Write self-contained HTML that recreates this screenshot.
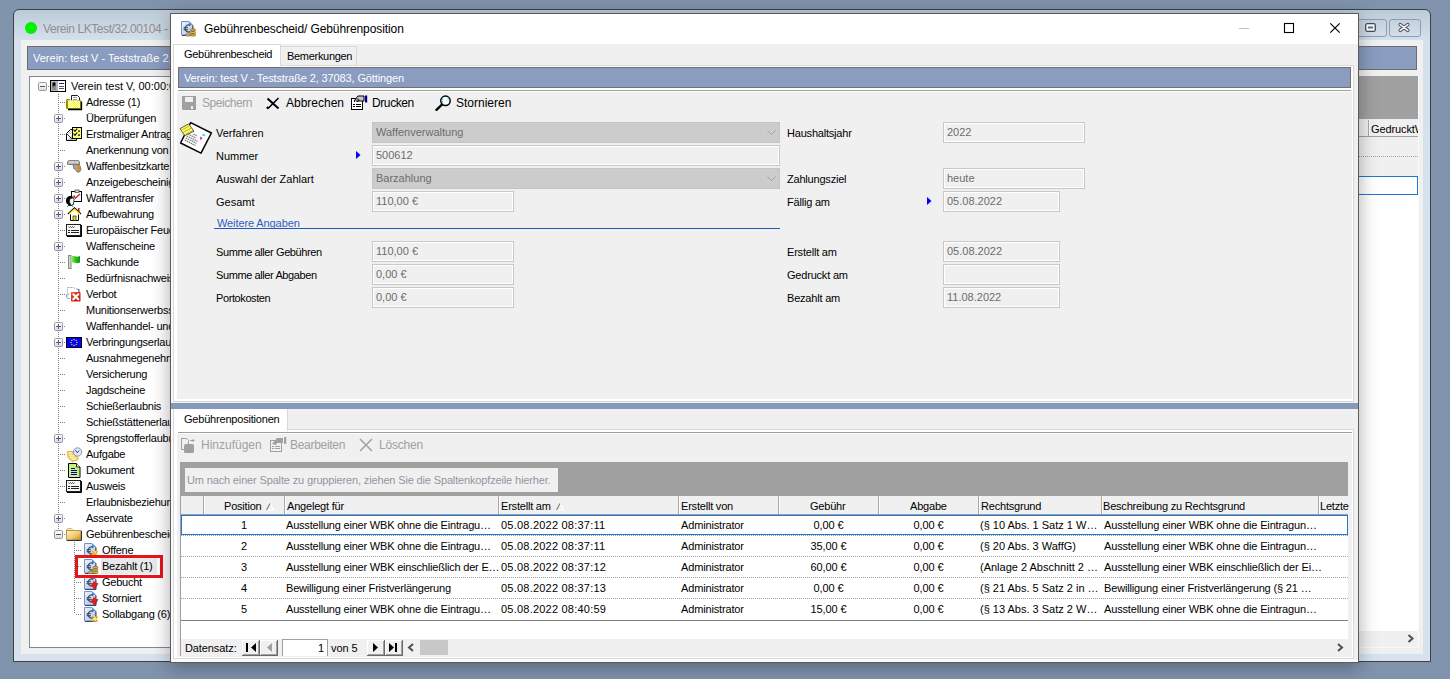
<!DOCTYPE html><html><head><meta charset="utf-8"><style>
html,body{margin:0;padding:0}
body{width:1450px;height:679px;overflow:hidden;position:relative;background:#7f93ad;font-family:"Liberation Sans",sans-serif}
.t{position:absolute;white-space:nowrap;font-family:"Liberation Sans",sans-serif}
.b{position:absolute;box-sizing:border-box}
svg{position:absolute;overflow:visible}
</style></head><body>
<div class="b" style="left:13px;top:9px;width:1418px;height:653px;border:1px solid #404040;border-radius:6px 6px 0 0;background:linear-gradient(#bccbd9 0px,#cfdce8 24px,#d5e2ee 31px,#d6e3ef 100%);"></div>
<div class="b" style="left:21px;top:40px;width:1402px;height:614px;background:#f0f0f0;"></div>
<div class="b" style="left:25px;top:22px;width:12px;height:12px;background:#00f000;border-radius:50%;"></div>
<div class="t" style="left:43px;top:22px;font-size:12px;line-height:14px;color:#948c8c;letter-spacing:-0.42px;">Verein LKTest/32.00104 - Teststraße 2, 37083, Göttingen</div>
<div class="b" style="left:1355px;top:19px;width:32px;height:18px;border:1px solid #8d9bb3;border-radius:3px;background:linear-gradient(#c4d1de,#d2deea);"></div>
<div class="b" style="left:1389px;top:19px;width:32px;height:18px;border:1px solid #8d9bb3;border-radius:3px;background:linear-gradient(#c4d1de,#d2deea);"></div>
<div class="b" style="left:27px;top:46px;width:1390px;height:24px;border:1px solid #6c6c6c;background:#8a9cc0;"></div>
<div class="t" style="left:33px;top:52px;font-size:11px;line-height:13px;color:#fff;">Verein: test V - Teststraße 2, 37083, Göttingen</div>
<div class="b" style="left:29px;top:76px;width:371px;height:572px;border:1px solid #828790;background:#fff;"></div>
<div class="b" style="left:58px;top:94px;width:1px;height:440px;background:repeating-linear-gradient(#808080 0 1px,transparent 1px 2px)"></div>
<div class="b" style="left:74px;top:542px;width:1px;height:72px;background:repeating-linear-gradient(#808080 0 1px,transparent 1px 2px)"></div>
<div class="t" style="left:71px;top:80px;font-size:11px;line-height:13px;color:#000;letter-spacing:0px;">Verein test V, 00:00:00</div>
<svg style="left:38px;top:82px" width="9" height="9" viewBox="0 0 9 9"><defs><linearGradient id="eg" x1="0" y1="0" x2="0" y2="1"><stop offset="0" stop-color="#ffffff"/><stop offset="1" stop-color="#dcdcdc"/></linearGradient></defs><rect x="0.5" y="0.5" width="8" height="8" rx="1.2" fill="url(#eg)" stroke="#989898"/><rect x="2" y="4" width="5" height="1" fill="#3d5a9c"/></svg>
<div class="b" style="left:48px;top:86px;width:2px;height:1px;background:repeating-linear-gradient(90deg,#808080 0 1px,transparent 1px 2px)"></div>
<svg style="left:50px;top:80px" width="16" height="12" viewBox="0 0 16 12"><rect x="0.5" y="0.5" width="15" height="11" fill="#fff" stroke="#000"/><rect x="1" y="1" width="6" height="10" fill="#b8b8b8"/><path d="M2.5 2.5 h3 v4 h-1 v-1 h-1 v2 h-1 z" fill="#000"/><rect x="2" y="7" width="4" height="3" fill="#8a8a8a"/><rect x="7" y="1" width="1" height="10" fill="#000" opacity="0.3"/><rect x="9" y="3" width="5" height="1" fill="#1a2ab0"/><rect x="9" y="6" width="5" height="1" fill="#555"/><rect x="9" y="8" width="5" height="1" fill="#555"/></svg>
<div class="t" style="left:86px;top:96px;font-size:11px;line-height:13px;color:#000;letter-spacing:-0.25px;">Adresse (1)</div>
<div class="b" style="left:60px;top:102px;width:6px;height:1px;background:repeating-linear-gradient(90deg,#808080 0 1px,transparent 1px 2px)"></div>
<svg style="left:66px;top:95px" width="17" height="16" viewBox="0 0 17 16"><defs><pattern id="dith" width="2" height="2" patternUnits="userSpaceOnUse"><rect width="2" height="2" fill="#ffff00"/><rect width="1" height="1" fill="#fff"/><rect x="1" y="1" width="1" height="1" fill="#fff"/></pattern></defs><path d="M0.5 4.5 h3 v9 h-3 z" fill="#e8e890" stroke="#909000"/><path d="M1.5 5.5 h13 v8 h-13 z" fill="url(#dith)" stroke="#909000"/><path d="M5.5 0.5 h6 l2 2 v3 h-8 z" fill="#fff" stroke="#202020"/><rect x="7" y="2" width="4" height="1" fill="#a0a0a0"/><rect x="7" y="4" width="4" height="1" fill="#a0a0a0"/><path d="M1.5 5.5 h12" stroke="#d8d8a0" stroke-width="1"/><path d="M2 14.5 h13.5 v-8" fill="none" stroke="#000" stroke-width="1.3"/></svg>
<div class="t" style="left:86px;top:112px;font-size:11px;line-height:13px;color:#000;letter-spacing:-0.25px;">Überprüfungen</div>
<svg style="left:54px;top:114px" width="9" height="9" viewBox="0 0 9 9"><defs><linearGradient id="eg" x1="0" y1="0" x2="0" y2="1"><stop offset="0" stop-color="#ffffff"/><stop offset="1" stop-color="#dcdcdc"/></linearGradient></defs><rect x="0.5" y="0.5" width="8" height="8" rx="1.2" fill="url(#eg)" stroke="#989898"/><rect x="2" y="4" width="5" height="1" fill="#3d5a9c"/><rect x="4" y="2" width="1" height="5" fill="#3d5a9c"/></svg>
<div class="b" style="left:64px;top:118px;width:2px;height:1px;background:repeating-linear-gradient(90deg,#808080 0 1px,transparent 1px 2px)"></div>
<div class="t" style="left:86px;top:128px;font-size:11px;line-height:13px;color:#000;letter-spacing:-0.25px;">Erstmaliger Antrag</div>
<div class="b" style="left:60px;top:134px;width:6px;height:1px;background:repeating-linear-gradient(90deg,#808080 0 1px,transparent 1px 2px)"></div>
<svg style="left:66px;top:127px" width="16" height="14" viewBox="0 0 16 14"><defs><pattern id="dith2" width="2" height="2" patternUnits="userSpaceOnUse"><rect width="2" height="2" fill="#ffff00"/><rect width="1" height="1" fill="#fff"/><rect x="1" y="1" width="1" height="1" fill="#fff"/></pattern><pattern id="dithg" width="2" height="2" patternUnits="userSpaceOnUse"><rect width="2" height="2" fill="#fff"/><rect width="1" height="1" fill="#c0c0c0"/><rect x="1" y="1" width="1" height="1" fill="#c0c0c0"/></pattern></defs><path d="M0.5 6.5 L4.5 2.5 h6 v11 h-10 z" fill="#fff" stroke="#000"/><path d="M1 7 L5 3 h3 v4 z" fill="url(#dithg)"/><path d="M1 13 L6 8 h4 v5 z" fill="#c8c8c8"/><path d="M1 7 L6 12" stroke="#000" stroke-width="0.8"/><rect x="6.5" y="0.5" width="9" height="11" fill="url(#dith2)" stroke="#000"/><path d="M7.5 2.5 l1.5 1.8 l2.2 -2.8 M7.5 6.5 l1.5 1.8 l2.2 -2.8" fill="none" stroke="#000" stroke-width="1.1"/><rect x="12" y="3.5" width="2" height="1.2" fill="#000"/><rect x="12" y="7.5" width="2" height="1.2" fill="#000"/></svg>
<div class="t" style="left:86px;top:144px;font-size:11px;line-height:13px;color:#000;letter-spacing:-0.25px;">Anerkennung von</div>
<div class="b" style="left:60px;top:150px;width:6px;height:1px;background:repeating-linear-gradient(90deg,#808080 0 1px,transparent 1px 2px)"></div>
<div class="t" style="left:86px;top:160px;font-size:11px;line-height:13px;color:#000;letter-spacing:-0.25px;">Waffenbesitzkarte</div>
<svg style="left:54px;top:162px" width="9" height="9" viewBox="0 0 9 9"><defs><linearGradient id="eg" x1="0" y1="0" x2="0" y2="1"><stop offset="0" stop-color="#ffffff"/><stop offset="1" stop-color="#dcdcdc"/></linearGradient></defs><rect x="0.5" y="0.5" width="8" height="8" rx="1.2" fill="url(#eg)" stroke="#989898"/><rect x="2" y="4" width="5" height="1" fill="#3d5a9c"/><rect x="4" y="2" width="1" height="5" fill="#3d5a9c"/></svg>
<div class="b" style="left:64px;top:166px;width:2px;height:1px;background:repeating-linear-gradient(90deg,#808080 0 1px,transparent 1px 2px)"></div>
<svg style="left:67px;top:160px" width="15" height="13" viewBox="0 0 15 13"><path d="M0.5 2 l1 -1.5 h10 l1 1 v3 h-12 z" fill="#b8b8b8" stroke="#787878" stroke-width="0.9"/><rect x="2" y="1.5" width="9" height="1" fill="#e8e8e8"/><rect x="7" y="1.5" width="1" height="1" fill="#d0a040"/><path d="M6 4.5 h6.5 l1.5 5 l-1.5 2.5 h-2.5 l-1.5 -3 h-1.5 z" fill="#a8a8a8" stroke="#707070" stroke-width="0.9"/><path d="M9.8 5 h2.5 l1.3 4.5 l-1.2 2 h-1.3 z" fill="#d09020"/></svg>
<div class="t" style="left:86px;top:176px;font-size:11px;line-height:13px;color:#000;letter-spacing:-0.25px;">Anzeigebescheinigung</div>
<svg style="left:54px;top:178px" width="9" height="9" viewBox="0 0 9 9"><defs><linearGradient id="eg" x1="0" y1="0" x2="0" y2="1"><stop offset="0" stop-color="#ffffff"/><stop offset="1" stop-color="#dcdcdc"/></linearGradient></defs><rect x="0.5" y="0.5" width="8" height="8" rx="1.2" fill="url(#eg)" stroke="#989898"/><rect x="2" y="4" width="5" height="1" fill="#3d5a9c"/><rect x="4" y="2" width="1" height="5" fill="#3d5a9c"/></svg>
<div class="b" style="left:64px;top:182px;width:2px;height:1px;background:repeating-linear-gradient(90deg,#808080 0 1px,transparent 1px 2px)"></div>
<div class="t" style="left:86px;top:192px;font-size:11px;line-height:13px;color:#000;letter-spacing:-0.25px;">Waffentransfer</div>
<svg style="left:54px;top:194px" width="9" height="9" viewBox="0 0 9 9"><defs><linearGradient id="eg" x1="0" y1="0" x2="0" y2="1"><stop offset="0" stop-color="#ffffff"/><stop offset="1" stop-color="#dcdcdc"/></linearGradient></defs><rect x="0.5" y="0.5" width="8" height="8" rx="1.2" fill="url(#eg)" stroke="#989898"/><rect x="2" y="4" width="5" height="1" fill="#3d5a9c"/><rect x="4" y="2" width="1" height="5" fill="#3d5a9c"/></svg>
<div class="b" style="left:64px;top:198px;width:2px;height:1px;background:repeating-linear-gradient(90deg,#808080 0 1px,transparent 1px 2px)"></div>
<svg style="left:65px;top:190px" width="18" height="17" viewBox="0 0 18 17"><rect x="6.5" y="1.5" width="10" height="10" fill="#fff" stroke="#000"/><rect x="10" y="0" width="4" height="2.5" fill="#d8d8d8" stroke="#404040" stroke-width="0.7"/><path d="M8.5 5.5 l2 2.5 l4.5 -4" fill="none" stroke="#d02020" stroke-width="1.3"/><path d="M1 11 C1 7.5 3 6 5.5 6 C7 6 8 6.6 8.5 7.5 L5.5 8.5 L4.5 10 L4.5 12.5 L5.5 14 L6 16 L3.5 16 L3 14.5 C1.8 14.2 1 12.8 1 11 Z" fill="#000"/><path d="M5.5 8.5 L8.5 7.8 L9.3 10 L8.6 10.8 L9.2 12 L8.4 12.6 L8.6 14.5 L7 15 L6.5 16 L5.5 14 L4.6 12.5 L4.6 10 Z" fill="#fff" stroke="#000" stroke-width="0.8"/><rect x="2" y="16" width="1.2" height="1" fill="#10b0b0"/><rect x="7" y="16" width="1.2" height="1" fill="#10b0b0"/></svg>
<div class="t" style="left:86px;top:208px;font-size:11px;line-height:13px;color:#000;letter-spacing:-0.25px;">Aufbewahrung</div>
<svg style="left:54px;top:210px" width="9" height="9" viewBox="0 0 9 9"><defs><linearGradient id="eg" x1="0" y1="0" x2="0" y2="1"><stop offset="0" stop-color="#ffffff"/><stop offset="1" stop-color="#dcdcdc"/></linearGradient></defs><rect x="0.5" y="0.5" width="8" height="8" rx="1.2" fill="url(#eg)" stroke="#989898"/><rect x="2" y="4" width="5" height="1" fill="#3d5a9c"/><rect x="4" y="2" width="1" height="5" fill="#3d5a9c"/></svg>
<div class="b" style="left:64px;top:214px;width:2px;height:1px;background:repeating-linear-gradient(90deg,#808080 0 1px,transparent 1px 2px)"></div>
<svg style="left:67px;top:207px" width="15" height="14" viewBox="0 0 15 14"><path d="M1 7 L7.5 1 L14 7" fill="none" stroke="#000" stroke-width="1.4"/><path d="M2 7 L7.5 2 L13 7" fill="none" stroke="#f0e000" stroke-width="1.2"/><path d="M3.5 7.5 v6 h8 v-6" fill="#fff" stroke="#000"/><rect x="6" y="9" width="3" height="4.5" fill="#f0e000" stroke="#000" stroke-width="0.6"/><rect x="11" y="1" width="1.5" height="4" fill="#a02020"/></svg>
<div class="t" style="left:86px;top:224px;font-size:11px;line-height:13px;color:#000;letter-spacing:-0.25px;">Europäischer Feuerwaffenpass</div>
<div class="b" style="left:60px;top:230px;width:6px;height:1px;background:repeating-linear-gradient(90deg,#808080 0 1px,transparent 1px 2px)"></div>
<svg style="left:66px;top:224px" width="16" height="13" viewBox="0 0 16 13"><rect x="0.5" y="0.5" width="14" height="11" fill="#f8f8f8" stroke="#202020"/><path d="M15.5 1 v11.5 h-14.5" fill="none" stroke="#000" stroke-width="1"/><path d="M2.5 2.5 l1 1.2 l1 -1.2 l1 1.2 l1 -1.2 l1 1.2 l1 -1.2" fill="none" stroke="#303030" stroke-width="0.8"/><rect x="2" y="6" width="2" height="1" fill="#202020"/><rect x="5" y="6" width="8" height="1" fill="#202020"/><rect x="2" y="8" width="2" height="1" fill="#202020"/><rect x="5" y="8" width="8" height="1" fill="#202020"/></svg>
<div class="t" style="left:86px;top:240px;font-size:11px;line-height:13px;color:#000;letter-spacing:-0.25px;">Waffenscheine</div>
<svg style="left:54px;top:242px" width="9" height="9" viewBox="0 0 9 9"><defs><linearGradient id="eg" x1="0" y1="0" x2="0" y2="1"><stop offset="0" stop-color="#ffffff"/><stop offset="1" stop-color="#dcdcdc"/></linearGradient></defs><rect x="0.5" y="0.5" width="8" height="8" rx="1.2" fill="url(#eg)" stroke="#989898"/><rect x="2" y="4" width="5" height="1" fill="#3d5a9c"/><rect x="4" y="2" width="1" height="5" fill="#3d5a9c"/></svg>
<div class="b" style="left:64px;top:246px;width:2px;height:1px;background:repeating-linear-gradient(90deg,#808080 0 1px,transparent 1px 2px)"></div>
<div class="t" style="left:86px;top:256px;font-size:11px;line-height:13px;color:#000;letter-spacing:-0.25px;">Sachkunde</div>
<div class="b" style="left:60px;top:262px;width:6px;height:1px;background:repeating-linear-gradient(90deg,#808080 0 1px,transparent 1px 2px)"></div>
<svg style="left:68px;top:255px" width="13" height="14" viewBox="0 0 13 14"><defs><linearGradient id="flg" x1="0" y1="0" x2="1" y2="0"><stop offset="0" stop-color="#a0f080"/><stop offset="0.5" stop-color="#30c020"/><stop offset="1" stop-color="#189010"/></linearGradient></defs><rect x="0.5" y="0.5" width="2.5" height="13" fill="#d8d8d8" stroke="#888"/><path d="M3 1.5 C6 0 8 3 12 1 V7.5 C8 9.5 6 6.5 3 8 Z" fill="url(#flg)"/></svg>
<div class="t" style="left:86px;top:272px;font-size:11px;line-height:13px;color:#000;letter-spacing:-0.25px;">Bedürfnisnachweis</div>
<div class="b" style="left:60px;top:278px;width:6px;height:1px;background:repeating-linear-gradient(90deg,#808080 0 1px,transparent 1px 2px)"></div>
<div class="t" style="left:86px;top:288px;font-size:11px;line-height:13px;color:#000;letter-spacing:-0.25px;">Verbot</div>
<div class="b" style="left:60px;top:294px;width:6px;height:1px;background:repeating-linear-gradient(90deg,#808080 0 1px,transparent 1px 2px)"></div>
<svg style="left:66px;top:287px" width="16" height="15" viewBox="0 0 16 15"><path d="M1.5 0.5 h6 l2 1.5 h3 l1 1" fill="none" stroke="#9098c8" stroke-width="0.9" stroke-dasharray="2 1"/><path d="M1.5 1 v9" stroke="#b8c0e0" stroke-width="0.8"/><path d="M12 2 l1 1.5 v2" stroke="#5060a0" stroke-width="1.2" fill="none"/><path d="M3 6.5 l-1 1.5 M0.5 7.5 v3 l1.5 1 h2" fill="none" stroke="#9098c8" stroke-width="0.9"/><defs><linearGradient id="vg" x1="0" y1="0" x2="1" y2="1"><stop offset="0" stop-color="#f85020"/><stop offset="1" stop-color="#c00808"/></linearGradient></defs><rect x="5" y="5" width="9.5" height="9.5" rx="0.8" fill="url(#vg)"/><path d="M7.3 7.3 l5 5 M12.3 7.3 l-5 5" stroke="#f4ffff" stroke-width="2.1" stroke-linecap="round"/></svg>
<div class="t" style="left:86px;top:304px;font-size:11px;line-height:13px;color:#000;letter-spacing:-0.25px;">Munitionserwerbsschein</div>
<div class="b" style="left:60px;top:310px;width:6px;height:1px;background:repeating-linear-gradient(90deg,#808080 0 1px,transparent 1px 2px)"></div>
<div class="t" style="left:86px;top:320px;font-size:11px;line-height:13px;color:#000;letter-spacing:-0.25px;">Waffenhandel- und</div>
<svg style="left:54px;top:322px" width="9" height="9" viewBox="0 0 9 9"><defs><linearGradient id="eg" x1="0" y1="0" x2="0" y2="1"><stop offset="0" stop-color="#ffffff"/><stop offset="1" stop-color="#dcdcdc"/></linearGradient></defs><rect x="0.5" y="0.5" width="8" height="8" rx="1.2" fill="url(#eg)" stroke="#989898"/><rect x="2" y="4" width="5" height="1" fill="#3d5a9c"/><rect x="4" y="2" width="1" height="5" fill="#3d5a9c"/></svg>
<div class="b" style="left:64px;top:326px;width:2px;height:1px;background:repeating-linear-gradient(90deg,#808080 0 1px,transparent 1px 2px)"></div>
<div class="t" style="left:86px;top:336px;font-size:11px;line-height:13px;color:#000;letter-spacing:-0.25px;">Verbringungserlaubnis</div>
<svg style="left:54px;top:338px" width="9" height="9" viewBox="0 0 9 9"><defs><linearGradient id="eg" x1="0" y1="0" x2="0" y2="1"><stop offset="0" stop-color="#ffffff"/><stop offset="1" stop-color="#dcdcdc"/></linearGradient></defs><rect x="0.5" y="0.5" width="8" height="8" rx="1.2" fill="url(#eg)" stroke="#989898"/><rect x="2" y="4" width="5" height="1" fill="#3d5a9c"/><rect x="4" y="2" width="1" height="5" fill="#3d5a9c"/></svg>
<div class="b" style="left:64px;top:342px;width:2px;height:1px;background:repeating-linear-gradient(90deg,#808080 0 1px,transparent 1px 2px)"></div>
<svg style="left:66px;top:337px" width="16" height="11" viewBox="0 0 16 11"><rect x="0.5" y="0.5" width="15" height="10" fill="#0000ff" stroke="#000"/><circle cx="11.00" cy="5.50" r="0.65" fill="#ffff00"/><circle cx="10.12" cy="7.62" r="0.65" fill="#ffff00"/><circle cx="8.00" cy="8.50" r="0.65" fill="#ffff00"/><circle cx="5.88" cy="7.62" r="0.65" fill="#ffff00"/><circle cx="5.00" cy="5.50" r="0.65" fill="#ffff00"/><circle cx="5.88" cy="3.38" r="0.65" fill="#ffff00"/><circle cx="8.00" cy="2.50" r="0.65" fill="#ffff00"/><circle cx="10.12" cy="3.38" r="0.65" fill="#ffff00"/></svg>
<div class="t" style="left:86px;top:352px;font-size:11px;line-height:13px;color:#000;letter-spacing:-0.25px;">Ausnahmegenehmigung</div>
<div class="b" style="left:60px;top:358px;width:6px;height:1px;background:repeating-linear-gradient(90deg,#808080 0 1px,transparent 1px 2px)"></div>
<div class="t" style="left:86px;top:368px;font-size:11px;line-height:13px;color:#000;letter-spacing:-0.25px;">Versicherung</div>
<div class="b" style="left:60px;top:374px;width:6px;height:1px;background:repeating-linear-gradient(90deg,#808080 0 1px,transparent 1px 2px)"></div>
<div class="t" style="left:86px;top:384px;font-size:11px;line-height:13px;color:#000;letter-spacing:-0.25px;">Jagdscheine</div>
<div class="b" style="left:60px;top:390px;width:6px;height:1px;background:repeating-linear-gradient(90deg,#808080 0 1px,transparent 1px 2px)"></div>
<div class="t" style="left:86px;top:400px;font-size:11px;line-height:13px;color:#000;letter-spacing:-0.25px;">Schießerlaubnis</div>
<div class="b" style="left:60px;top:406px;width:6px;height:1px;background:repeating-linear-gradient(90deg,#808080 0 1px,transparent 1px 2px)"></div>
<div class="t" style="left:86px;top:416px;font-size:11px;line-height:13px;color:#000;letter-spacing:-0.25px;">Schießstättenerlaubnis</div>
<div class="b" style="left:60px;top:422px;width:6px;height:1px;background:repeating-linear-gradient(90deg,#808080 0 1px,transparent 1px 2px)"></div>
<div class="t" style="left:86px;top:432px;font-size:11px;line-height:13px;color:#000;letter-spacing:-0.25px;">Sprengstofferlaubnis</div>
<svg style="left:54px;top:434px" width="9" height="9" viewBox="0 0 9 9"><defs><linearGradient id="eg" x1="0" y1="0" x2="0" y2="1"><stop offset="0" stop-color="#ffffff"/><stop offset="1" stop-color="#dcdcdc"/></linearGradient></defs><rect x="0.5" y="0.5" width="8" height="8" rx="1.2" fill="url(#eg)" stroke="#989898"/><rect x="2" y="4" width="5" height="1" fill="#3d5a9c"/><rect x="4" y="2" width="1" height="5" fill="#3d5a9c"/></svg>
<div class="b" style="left:64px;top:438px;width:2px;height:1px;background:repeating-linear-gradient(90deg,#808080 0 1px,transparent 1px 2px)"></div>
<div class="t" style="left:86px;top:448px;font-size:11px;line-height:13px;color:#000;letter-spacing:-0.25px;">Aufgabe</div>
<div class="b" style="left:60px;top:454px;width:6px;height:1px;background:repeating-linear-gradient(90deg,#808080 0 1px,transparent 1px 2px)"></div>
<svg style="left:67px;top:447px" width="16" height="15" viewBox="0 0 16 15"><path d="M0.5 4.5 h5 l6 7 l-1 1.5 l-5.5 1.5 l-4 -4 z" fill="#f0d870" stroke="#e0b020" stroke-width="0.9"/><path d="M1.5 6 h3.5 M2 8 l5 1 M3 10 l5.5 1.5 M4.5 12 l4 0.5" stroke="#fff8d0" stroke-width="0.9"/><circle cx="10.5" cy="5" r="4.2" fill="#dde8fa" stroke="#8088b0" stroke-width="0.9"/><path d="M8.3 3.2 l2 2.6 l1.8 -2.2" fill="none" stroke="#303040" stroke-width="0.9"/></svg>
<div class="t" style="left:86px;top:464px;font-size:11px;line-height:13px;color:#000;letter-spacing:-0.25px;">Dokument</div>
<div class="b" style="left:60px;top:470px;width:6px;height:1px;background:repeating-linear-gradient(90deg,#808080 0 1px,transparent 1px 2px)"></div>
<svg style="left:68px;top:463px" width="13" height="15" viewBox="0 0 13 15"><path d="M0.5 0.5 h8 l3.5 3.5 v10.5 h-11.5 z" fill="#c8f080" stroke="#000"/><path d="M8.5 0.5 v3.5 h3.5" fill="#fff" stroke="#000" stroke-width="0.8"/><rect x="3" y="5" width="4" height="1" fill="#0000a0"/><rect x="3" y="7" width="6" height="1" fill="#0000a0"/><rect x="3" y="9" width="6" height="1" fill="#0000a0"/><rect x="3" y="11" width="6" height="1" fill="#0000a0"/></svg>
<div class="t" style="left:86px;top:480px;font-size:11px;line-height:13px;color:#000;letter-spacing:-0.25px;">Ausweis</div>
<div class="b" style="left:60px;top:486px;width:6px;height:1px;background:repeating-linear-gradient(90deg,#808080 0 1px,transparent 1px 2px)"></div>
<svg style="left:66px;top:480px" width="16" height="13" viewBox="0 0 16 13"><rect x="0.5" y="0.5" width="14" height="11" fill="#f8f8f8" stroke="#202020"/><path d="M15.5 1 v11.5 h-14.5" fill="none" stroke="#000" stroke-width="1"/><path d="M2.5 2.5 l1 1.2 l1 -1.2 l1 1.2 l1 -1.2 l1 1.2 l1 -1.2" fill="none" stroke="#303030" stroke-width="0.8"/><rect x="2" y="6" width="2" height="1" fill="#202020"/><rect x="5" y="6" width="8" height="1" fill="#202020"/><rect x="2" y="8" width="2" height="1" fill="#202020"/><rect x="5" y="8" width="8" height="1" fill="#202020"/></svg>
<div class="t" style="left:86px;top:496px;font-size:11px;line-height:13px;color:#000;letter-spacing:-0.25px;">Erlaubnisbeziehung</div>
<div class="b" style="left:60px;top:502px;width:6px;height:1px;background:repeating-linear-gradient(90deg,#808080 0 1px,transparent 1px 2px)"></div>
<div class="t" style="left:86px;top:512px;font-size:11px;line-height:13px;color:#000;letter-spacing:-0.25px;">Asservate</div>
<svg style="left:54px;top:514px" width="9" height="9" viewBox="0 0 9 9"><defs><linearGradient id="eg" x1="0" y1="0" x2="0" y2="1"><stop offset="0" stop-color="#ffffff"/><stop offset="1" stop-color="#dcdcdc"/></linearGradient></defs><rect x="0.5" y="0.5" width="8" height="8" rx="1.2" fill="url(#eg)" stroke="#989898"/><rect x="2" y="4" width="5" height="1" fill="#3d5a9c"/><rect x="4" y="2" width="1" height="5" fill="#3d5a9c"/></svg>
<div class="b" style="left:64px;top:518px;width:2px;height:1px;background:repeating-linear-gradient(90deg,#808080 0 1px,transparent 1px 2px)"></div>
<div class="t" style="left:86px;top:528px;font-size:11px;line-height:13px;color:#000;letter-spacing:-0.25px;">Gebührenbescheide</div>
<svg style="left:54px;top:530px" width="9" height="9" viewBox="0 0 9 9"><defs><linearGradient id="eg" x1="0" y1="0" x2="0" y2="1"><stop offset="0" stop-color="#ffffff"/><stop offset="1" stop-color="#dcdcdc"/></linearGradient></defs><rect x="0.5" y="0.5" width="8" height="8" rx="1.2" fill="url(#eg)" stroke="#989898"/><rect x="2" y="4" width="5" height="1" fill="#3d5a9c"/></svg>
<div class="b" style="left:64px;top:534px;width:2px;height:1px;background:repeating-linear-gradient(90deg,#808080 0 1px,transparent 1px 2px)"></div>
<svg style="left:66px;top:528px" width="16" height="13" viewBox="0 0 16 13"><defs><linearGradient id="fg" x1="0" y1="0" x2="1" y2="1"><stop offset="0" stop-color="#fff4c0"/><stop offset="0.55" stop-color="#f0cc70"/><stop offset="1" stop-color="#c08a20"/></linearGradient></defs><path d="M0.5 1.5 l1 -1 h4 l1 1 h0 v1 h-6 z" fill="#f8eab0" stroke="#c8b070" stroke-width="0.8"/><rect x="0.5" y="2.5" width="14.5" height="9.5" fill="url(#fg)" stroke="#a08040" stroke-width="0.8"/><path d="M1 12.5 h14.5 v-9.5" fill="none" stroke="#303030" stroke-width="1"/></svg>
<div class="t" style="left:102px;top:544px;font-size:11px;line-height:13px;color:#000;letter-spacing:-0.25px;">Offene</div>
<div class="b" style="left:76px;top:550px;width:6px;height:1px;background:repeating-linear-gradient(90deg,#808080 0 1px,transparent 1px 2px)"></div>
<svg style="left:84px;top:543px" width="14" height="15" viewBox="0 0 14 15"><defs><linearGradient id="pg" x1="0" y1="0" x2="1" y2="1"><stop offset="0" stop-color="#f0f6ff"/><stop offset="1" stop-color="#a8c0ec"/></linearGradient></defs><path d="M0.5 0.5 h7.5 l3.5 3.5 v10 h-11 z" fill="url(#pg)" stroke="#7890c8"/><path d="M8 0.5 l3.5 3.5 h-3.5 z" fill="#4a90e0"/><path d="M1 14.5 h11 v-10" fill="none" stroke="#404858" stroke-width="1"/><path d="M9.2 4.6 A3.4 3.4 0 1 0 9.2 10.4" fill="none" stroke="#404850" stroke-width="1.2"/><rect x="2.5" y="6.2" width="4.5" height="1" fill="#404850"/><rect x="2.5" y="8.2" width="4.5" height="1" fill="#404850"/><rect x="8.5" y="8" width="5" height="4" fill="#ffe030"/><path d="M8.5 8 l2.5 4 l2.5 -4" fill="none" stroke="#f08020" stroke-width="0.9"/></svg>
<div class="b" style="left:101px;top:558px;width:56px;height:16px;background:#e9e9e9;"></div>
<div class="t" style="left:102px;top:560px;font-size:11px;line-height:13px;color:#000;letter-spacing:-0.25px;">Bezahlt (1)</div>
<div class="b" style="left:76px;top:566px;width:6px;height:1px;background:repeating-linear-gradient(90deg,#808080 0 1px,transparent 1px 2px)"></div>
<svg style="left:84px;top:559px" width="15" height="15" viewBox="0 0 15 15"><defs><linearGradient id="pg" x1="0" y1="0" x2="1" y2="1"><stop offset="0" stop-color="#f0f6ff"/><stop offset="1" stop-color="#a8c0ec"/></linearGradient></defs><path d="M0.5 0.5 h7.5 l3.5 3.5 v10 h-11 z" fill="url(#pg)" stroke="#7890c8"/><path d="M8 0.5 l3.5 3.5 h-3.5 z" fill="#4a90e0"/><path d="M1 14.5 h11 v-10" fill="none" stroke="#404858" stroke-width="1"/><path d="M9.2 4.6 A3.4 3.4 0 1 0 9.2 10.4" fill="none" stroke="#404850" stroke-width="1.2"/><rect x="2.5" y="6.2" width="4.5" height="1" fill="#404850"/><rect x="2.5" y="8.2" width="4.5" height="1" fill="#404850"/><rect x="9" y="7.5" width="5" height="2" rx="0.8" fill="#d8b050" stroke="#906820" stroke-width="0.6"/><rect x="9" y="10" width="5" height="2" rx="0.8" fill="#d8b050" stroke="#906820" stroke-width="0.6"/><rect x="9" y="12.5" width="5" height="2" rx="0.8" fill="#d8b050" stroke="#906820" stroke-width="0.6"/><rect x="4" y="12.5" width="5" height="2" rx="0.8" fill="#d8b050" stroke="#906820" stroke-width="0.6"/></svg>
<div class="t" style="left:102px;top:576px;font-size:11px;line-height:13px;color:#000;letter-spacing:-0.25px;">Gebucht</div>
<div class="b" style="left:76px;top:582px;width:6px;height:1px;background:repeating-linear-gradient(90deg,#808080 0 1px,transparent 1px 2px)"></div>
<svg style="left:84px;top:575px" width="15" height="15" viewBox="0 0 15 15"><defs><linearGradient id="pg" x1="0" y1="0" x2="1" y2="1"><stop offset="0" stop-color="#f0f6ff"/><stop offset="1" stop-color="#a8c0ec"/></linearGradient></defs><path d="M0.5 0.5 h7.5 l3.5 3.5 v10 h-11 z" fill="url(#pg)" stroke="#7890c8"/><path d="M8 0.5 l3.5 3.5 h-3.5 z" fill="#4a90e0"/><path d="M1 14.5 h11 v-10" fill="none" stroke="#404858" stroke-width="1"/><path d="M9.2 4.6 A3.4 3.4 0 1 0 9.2 10.4" fill="none" stroke="#404850" stroke-width="1.2"/><rect x="2.5" y="6.2" width="4.5" height="1" fill="#404850"/><rect x="2.5" y="8.2" width="4.5" height="1" fill="#404850"/><path d="M7 8.5 h7 l-3.5 6 z" fill="#e02020" stroke="#a01010" stroke-width="0.6"/><rect x="9" y="6.5" width="3" height="3" fill="#e02020"/></svg>
<div class="t" style="left:102px;top:592px;font-size:11px;line-height:13px;color:#000;letter-spacing:-0.25px;">Storniert</div>
<div class="b" style="left:76px;top:598px;width:6px;height:1px;background:repeating-linear-gradient(90deg,#808080 0 1px,transparent 1px 2px)"></div>
<svg style="left:84px;top:591px" width="15" height="15" viewBox="0 0 15 15"><defs><linearGradient id="pg" x1="0" y1="0" x2="1" y2="1"><stop offset="0" stop-color="#f0f6ff"/><stop offset="1" stop-color="#a8c0ec"/></linearGradient></defs><path d="M0.5 0.5 h7.5 l3.5 3.5 v10 h-11 z" fill="url(#pg)" stroke="#7890c8"/><path d="M8 0.5 l3.5 3.5 h-3.5 z" fill="#4a90e0"/><path d="M1 14.5 h11 v-10" fill="none" stroke="#404858" stroke-width="1"/><path d="M9.2 4.6 A3.4 3.4 0 1 0 9.2 10.4" fill="none" stroke="#404850" stroke-width="1.2"/><rect x="2.5" y="6.2" width="4.5" height="1" fill="#404850"/><rect x="2.5" y="8.2" width="4.5" height="1" fill="#404850"/><path d="M7 8.5 h7 l-3.5 6 z" fill="#e02020" stroke="#a01010" stroke-width="0.6"/><rect x="9" y="6.5" width="3" height="3" fill="#e02020"/></svg>
<div class="t" style="left:102px;top:608px;font-size:11px;line-height:13px;color:#000;letter-spacing:-0.25px;">Sollabgang (6)</div>
<div class="b" style="left:76px;top:614px;width:6px;height:1px;background:repeating-linear-gradient(90deg,#808080 0 1px,transparent 1px 2px)"></div>
<svg style="left:84px;top:607px" width="14" height="15" viewBox="0 0 14 15"><defs><linearGradient id="pg" x1="0" y1="0" x2="1" y2="1"><stop offset="0" stop-color="#f0f6ff"/><stop offset="1" stop-color="#a8c0ec"/></linearGradient></defs><path d="M0.5 0.5 h7.5 l3.5 3.5 v10 h-11 z" fill="url(#pg)" stroke="#7890c8"/><path d="M8 0.5 l3.5 3.5 h-3.5 z" fill="#4a90e0"/><path d="M1 14.5 h11 v-10" fill="none" stroke="#404858" stroke-width="1"/><path d="M9.2 4.6 A3.4 3.4 0 1 0 9.2 10.4" fill="none" stroke="#404850" stroke-width="1.2"/><rect x="2.5" y="6.2" width="4.5" height="1" fill="#404850"/><rect x="2.5" y="8.2" width="4.5" height="1" fill="#404850"/><rect x="8.5" y="9.5" width="5" height="5" fill="#ffe030"/><path d="M8.5 9.5 l5 5 M13.5 9.5 l-5 5" stroke="#e05010" stroke-width="0.8"/><circle cx="11" cy="12" r="1" fill="#fff"/></svg>
<div class="b" style="left:75px;top:555px;width:88px;height:23px;border:3px solid #e8141c;"></div>
<div class="b" style="left:1000px;top:76px;width:418px;height:43px;background:#a0a0a0;"></div>
<div class="b" style="left:1000px;top:119px;width:418px;height:18px;background:#f0f0f0;border-bottom:1px solid #a0a0a0;"></div>
<div class="b" style="left:1368px;top:120px;width:1px;height:16px;background:#a9a9a9;"></div>
<div class="b" style="left:1369px;top:120px;width:1px;height:16px;background:#fff;"></div>
<div class="t" style="left:1371px;top:123px;font-size:11px;line-height:13px;color:#000;letter-spacing:-0.1px;width:47px;overflow:hidden;">GedrucktWeiter</div>
<div class="b" style="left:1000px;top:137px;width:418px;height:39px;background:#f0f0f0;"></div>
<div class="b" style="left:1000px;top:156px;width:418px;height:1px;border-top:1px dotted #a0a0a0;"></div>
<div class="b" style="left:1000px;top:176px;width:418px;height:19px;background:#fff;border:1px solid #1e78d2;"></div>
<div class="b" style="left:1000px;top:195px;width:418px;height:436px;background:#fff;"></div>
<div class="b" style="left:1000px;top:631px;width:418px;height:16px;background:#f0f0f0;"></div>
<div class="b" style="left:1000px;top:647px;width:419px;height:1px;background:#fafafa;"></div>
<div class="b" style="left:1418px;top:76px;width:1px;height:572px;background:#fafafa;"></div>
<svg style="left:1407px;top:634px" width="8" height="9"><path d="M1.5 1 L5.5 4.5 L1.5 8" fill="none" stroke="#505050" stroke-width="2"/></svg>
<!--DIALOG-->
<div class="b" style="left:170px;top:13px;width:1189px;height:650px;border:1px solid #5b5b5b;background:#f0f0f0;box-shadow:0 4px 18px rgba(0,0,0,0.33);"></div>
<div class="b" style="left:171px;top:14px;width:1187px;height:30px;background:#fff;"></div>
<div class="t" style="left:204px;top:22px;font-size:12px;line-height:14px;color:#000;letter-spacing:-0.09px;">Gebührenbescheid/ Gebührenposition</div>
<div class="b" style="left:280px;top:46px;width:77px;height:19px;border:1px solid #d9d9d9;border-bottom:none;background:#f0f0f0;"></div>
<div class="b" style="left:173px;top:65px;width:1181px;height:337px;border:1px solid #d9d9d9;background:#fff;"></div>
<div class="b" style="left:177px;top:92px;width:1175px;height:307px;background:#f0f0f0;"></div>
<div class="b" style="left:173px;top:44px;width:108px;height:22px;border:1px solid #d9d9d9;border-bottom:none;background:#fff;"></div>
<div class="t" style="left:184px;top:48px;font-size:11px;line-height:13px;color:#000;letter-spacing:-0.3px;">Gebührenbescheid</div>
<div class="t" style="left:287px;top:50px;font-size:11px;line-height:13px;color:#000;letter-spacing:-0.3px;">Bemerkungen</div>
<div class="b" style="left:171px;top:44px;width:2px;height:618px;background:#fafafa;"></div>
<div class="b" style="left:171px;top:659px;width:1187px;height:3px;background:#fafafa;"></div>
<div class="b" style="left:178px;top:67px;width:1173px;height:21px;border:1px solid #707070;background:#8a9cc0;"></div>
<div class="t" style="left:184px;top:72px;font-size:11px;line-height:13px;color:#fff;letter-spacing:-0.13px;">Verein: test V - Teststraße 2, 37083, Göttingen</div>
<div class="b" style="left:178px;top:88px;width:1174px;height:2px;background:#fff;"></div>
<div class="b" style="left:178px;top:90px;width:1173px;height:1px;background:#a0a0a0;"></div>
<div class="t" style="left:202px;top:96px;font-size:12px;line-height:14px;color:#a0a0a0;letter-spacing:-0.45px;">Speichern</div>
<div class="t" style="left:286px;top:96px;font-size:12px;line-height:14px;color:#000;">Abbrechen</div>
<div class="t" style="left:372px;top:96px;font-size:12px;line-height:14px;color:#000;letter-spacing:-0.4px;">Drucken</div>
<div class="t" style="left:456px;top:96px;font-size:12px;line-height:14px;color:#000;">Stornieren</div>
<div class="t" style="left:216px;top:127px;font-size:11px;line-height:13px;color:#000;letter-spacing:0px;">Verfahren</div>
<div class="t" style="left:216px;top:150px;font-size:11px;line-height:13px;color:#000;letter-spacing:0px;">Nummer</div>
<div class="t" style="left:216px;top:173px;font-size:11px;line-height:13px;color:#000;letter-spacing:0px;">Auswahl der Zahlart</div>
<div class="t" style="left:216px;top:196px;font-size:11px;line-height:13px;color:#000;letter-spacing:0px;">Gesamt</div>
<div class="t" style="left:217px;top:217px;font-size:11px;line-height:13px;color:#2b5fc4;letter-spacing:-0.1px;">Weitere Angaben</div>
<div class="b" style="left:214px;top:228px;width:566px;height:1px;background:#2257bb;"></div>
<div class="t" style="left:216px;top:246px;font-size:11px;line-height:13px;color:#000;letter-spacing:-0.4px;">Summe aller Gebühren</div>
<div class="t" style="left:216px;top:269px;font-size:11px;line-height:13px;color:#000;letter-spacing:-0.4px;">Summe aller Abgaben</div>
<div class="t" style="left:216px;top:292px;font-size:11px;line-height:13px;color:#000;letter-spacing:-0.4px;">Portokosten</div>
<div class="t" style="left:787px;top:127px;font-size:11px;line-height:13px;color:#000;letter-spacing:-0.2px;">Haushaltsjahr</div>
<div class="t" style="left:787px;top:173px;font-size:11px;line-height:13px;color:#000;letter-spacing:-0.2px;">Zahlungsziel</div>
<div class="t" style="left:787px;top:196px;font-size:11px;line-height:13px;color:#000;letter-spacing:-0.2px;">Fällig am</div>
<div class="t" style="left:787px;top:246px;font-size:11px;line-height:13px;color:#000;letter-spacing:-0.2px;">Erstellt am</div>
<div class="t" style="left:787px;top:269px;font-size:11px;line-height:13px;color:#000;letter-spacing:-0.2px;">Gedruckt am</div>
<div class="t" style="left:787px;top:292px;font-size:11px;line-height:13px;color:#000;letter-spacing:-0.2px;">Bezahlt am</div>
<div class="b" style="left:372px;top:122px;width:408px;height:21px;background:#cccccc;border:1px solid #c4c4c4;"></div>
<svg style="left:767px;top:130px" width="9" height="5"><path d="M0.5 0.5 L4.5 4.5 L8.5 0.5" fill="none" stroke="#a0a0a0" stroke-width="1"/></svg>
<div class="t" style="left:376px;top:126px;font-size:11px;line-height:13px;color:#6d6d6d;letter-spacing:0px;">Waffenverwaltung</div>
<div class="b" style="left:372px;top:145px;width:408px;height:21px;background:#f0f0f0;border:1px solid #c8c8c8;box-shadow:inset 0 0 0 1px #fff;"></div>
<div class="t" style="left:376px;top:149px;font-size:11px;line-height:13px;color:#6d6d6d;letter-spacing:0px;">500612</div>
<div class="b" style="left:372px;top:168px;width:408px;height:21px;background:#cccccc;border:1px solid #c4c4c4;"></div>
<svg style="left:767px;top:176px" width="9" height="5"><path d="M0.5 0.5 L4.5 4.5 L8.5 0.5" fill="none" stroke="#a0a0a0" stroke-width="1"/></svg>
<div class="t" style="left:376px;top:172px;font-size:11px;line-height:13px;color:#6d6d6d;letter-spacing:0px;">Barzahlung</div>
<div class="b" style="left:372px;top:191px;width:142px;height:21px;background:#f0f0f0;border:1px solid #c8c8c8;box-shadow:inset 0 0 0 1px #fff;"></div>
<div class="t" style="left:376px;top:195px;font-size:11px;line-height:13px;color:#6d6d6d;letter-spacing:0px;">110,00 €</div>
<div class="b" style="left:372px;top:241px;width:142px;height:21px;background:#f0f0f0;border:1px solid #c8c8c8;box-shadow:inset 0 0 0 1px #fff;"></div>
<div class="t" style="left:376px;top:245px;font-size:11px;line-height:13px;color:#6d6d6d;letter-spacing:0px;">110,00 €</div>
<div class="b" style="left:372px;top:264px;width:142px;height:21px;background:#f0f0f0;border:1px solid #c8c8c8;box-shadow:inset 0 0 0 1px #fff;"></div>
<div class="t" style="left:376px;top:268px;font-size:11px;line-height:13px;color:#6d6d6d;letter-spacing:0px;">0,00 €</div>
<div class="b" style="left:372px;top:287px;width:142px;height:21px;background:#f0f0f0;border:1px solid #c8c8c8;box-shadow:inset 0 0 0 1px #fff;"></div>
<div class="t" style="left:376px;top:291px;font-size:11px;line-height:13px;color:#6d6d6d;letter-spacing:0px;">0,00 €</div>
<div class="b" style="left:943px;top:122px;width:142px;height:21px;background:#f0f0f0;border:1px solid #c8c8c8;box-shadow:inset 0 0 0 1px #fff;"></div>
<div class="t" style="left:947px;top:126px;font-size:11px;line-height:13px;color:#6d6d6d;letter-spacing:0px;">2022</div>
<div class="b" style="left:943px;top:168px;width:142px;height:21px;background:#f0f0f0;border:1px solid #c8c8c8;box-shadow:inset 0 0 0 1px #fff;"></div>
<div class="t" style="left:947px;top:172px;font-size:11px;line-height:13px;color:#6d6d6d;letter-spacing:0px;">heute</div>
<div class="b" style="left:943px;top:191px;width:117px;height:21px;background:#f0f0f0;border:1px solid #c8c8c8;box-shadow:inset 0 0 0 1px #fff;"></div>
<div class="t" style="left:947px;top:195px;font-size:11px;line-height:13px;color:#6d6d6d;letter-spacing:0px;">05.08.2022</div>
<div class="b" style="left:943px;top:241px;width:117px;height:21px;background:#f0f0f0;border:1px solid #c8c8c8;box-shadow:inset 0 0 0 1px #fff;"></div>
<div class="t" style="left:947px;top:245px;font-size:11px;line-height:13px;color:#6d6d6d;letter-spacing:0px;">05.08.2022</div>
<div class="b" style="left:943px;top:264px;width:117px;height:21px;background:#f0f0f0;border:1px solid #c8c8c8;box-shadow:inset 0 0 0 1px #fff;"></div>
<div class="b" style="left:943px;top:287px;width:117px;height:21px;background:#f0f0f0;border:1px solid #c8c8c8;box-shadow:inset 0 0 0 1px #fff;"></div>
<div class="t" style="left:947px;top:291px;font-size:11px;line-height:13px;color:#6d6d6d;letter-spacing:0px;">11.08.2022</div>
<svg style="left:356px;top:151px" width="5" height="8"><path d="M0 0 L4.5 4 L0 8 Z" fill="#0000ff"/></svg>
<svg style="left:927px;top:197px" width="5" height="8"><path d="M0 0 L4.5 4 L0 8 Z" fill="#0000ff"/></svg>
<div class="b" style="left:171px;top:403px;width:1187px;height:6px;background:#8599bb;"></div>
<div class="b" style="left:173px;top:429px;width:1181px;height:230px;border:1px solid #d9d9d9;background:#fff;"></div>
<div class="b" style="left:177px;top:434px;width:1175px;height:223px;background:#f0f0f0;"></div>
<div class="b" style="left:173px;top:409px;width:115px;height:22px;border:1px solid #d9d9d9;border-top:none;border-bottom:none;background:#fff;"></div>
<div class="t" style="left:184px;top:413px;font-size:11px;line-height:13px;color:#000;letter-spacing:-0.2px;">Gebührenpositionen</div>
<div class="b" style="left:178px;top:432px;width:1174px;height:1px;background:#a0a0a0;"></div>
<div class="b" style="left:178px;top:433px;width:1174px;height:1px;background:#fff;"></div>
<div class="t" style="left:201px;top:438px;font-size:12px;line-height:14px;color:#a0a0a0;">Hinzufügen</div>
<div class="t" style="left:290px;top:438px;font-size:12px;line-height:14px;color:#a0a0a0;letter-spacing:-0.3px;">Bearbeiten</div>
<div class="t" style="left:379px;top:438px;font-size:12px;line-height:14px;color:#a0a0a0;letter-spacing:-0.2px;">Löschen</div>
<div class="b" style="left:180px;top:462px;width:1168px;height:194px;background:#a0a0a0;"></div>
<div class="b" style="left:185px;top:468px;width:373px;height:24px;background:#f0f0f0;"></div>
<div class="t" style="left:187px;top:474px;font-size:11px;line-height:13px;color:#9494a4;letter-spacing:-0.15px;">Um nach einer Spalte zu gruppieren, ziehen Sie die Spaltenkopfzeile hierher.</div>
<div class="b" style="left:181px;top:496px;width:1167px;height:18px;background:#f0f0f0;"></div>
<div class="b" style="left:181px;top:514px;width:1167px;height:1px;background:#a0a0a0;"></div>
<div class="b" style="left:181px;top:515px;width:1167px;height:124px;background:#fff;"></div>
<div class="b" style="left:181px;top:639px;width:1167px;height:17px;background:#f0f0f0;"></div>
<div class="b" style="left:203px;top:496px;width:1px;height:18px;background:#a9a9a9;"></div>
<div class="b" style="left:204px;top:496px;width:1px;height:18px;background:#fff;"></div>
<div class="b" style="left:284px;top:496px;width:1px;height:18px;background:#a9a9a9;"></div>
<div class="b" style="left:285px;top:496px;width:1px;height:18px;background:#fff;"></div>
<div class="b" style="left:498px;top:496px;width:1px;height:18px;background:#a9a9a9;"></div>
<div class="b" style="left:499px;top:496px;width:1px;height:18px;background:#fff;"></div>
<div class="b" style="left:678px;top:496px;width:1px;height:18px;background:#a9a9a9;"></div>
<div class="b" style="left:679px;top:496px;width:1px;height:18px;background:#fff;"></div>
<div class="b" style="left:778px;top:496px;width:1px;height:18px;background:#a9a9a9;"></div>
<div class="b" style="left:779px;top:496px;width:1px;height:18px;background:#fff;"></div>
<div class="b" style="left:878px;top:496px;width:1px;height:18px;background:#a9a9a9;"></div>
<div class="b" style="left:879px;top:496px;width:1px;height:18px;background:#fff;"></div>
<div class="b" style="left:978px;top:496px;width:1px;height:18px;background:#a9a9a9;"></div>
<div class="b" style="left:979px;top:496px;width:1px;height:18px;background:#fff;"></div>
<div class="b" style="left:1101px;top:496px;width:1px;height:18px;background:#a9a9a9;"></div>
<div class="b" style="left:1102px;top:496px;width:1px;height:18px;background:#fff;"></div>
<div class="b" style="left:1318px;top:496px;width:1px;height:18px;background:#a9a9a9;"></div>
<div class="b" style="left:1319px;top:496px;width:1px;height:18px;background:#fff;"></div>
<div class="t" style="left:224px;top:500px;font-size:11px;line-height:13px;color:#000;letter-spacing:-0.2px;">Position</div>
<div class="t" style="left:287px;top:500px;font-size:11px;line-height:13px;color:#000;letter-spacing:-0.2px;">Angelegt für</div>
<div class="t" style="left:501px;top:500px;font-size:11px;line-height:13px;color:#000;letter-spacing:-0.2px;">Erstellt am</div>
<div class="t" style="left:681px;top:500px;font-size:11px;line-height:13px;color:#000;letter-spacing:-0.2px;">Erstellt von</div>
<div class="t" style="left:810px;top:500px;font-size:11px;line-height:13px;color:#000;letter-spacing:-0.2px;">Gebühr</div>
<div class="t" style="left:910px;top:500px;font-size:11px;line-height:13px;color:#000;letter-spacing:-0.2px;">Abgabe</div>
<div class="t" style="left:981px;top:500px;font-size:11px;line-height:13px;color:#000;letter-spacing:-0.2px;">Rechtsgrund</div>
<div class="t" style="left:1103px;top:500px;font-size:11px;line-height:13px;color:#000;letter-spacing:-0.2px;">Beschreibung zu Rechtsgrund</div>
<div class="t" style="left:1320px;top:500px;font-size:11px;line-height:13px;color:#000;letter-spacing:-0.2px;">Letzte</div>
<div class="t" style="left:204px;top:519px;width:80px;text-align:center;font-size:11px;line-height:13px">1</div>
<div class="t" style="left:286px;top:519px;font-size:11px;line-height:13px;color:#000;letter-spacing:-0.2px;">Ausstellung einer WBK ohne die Eintragu…</div>
<div class="t" style="left:501px;top:519px;font-size:11px;line-height:13px;color:#000;letter-spacing:0.22px;">05.08.2022 08:37:11</div>
<div class="t" style="left:681px;top:519px;font-size:11px;line-height:13px;color:#000;letter-spacing:-0.15px;">Administrator</div>
<div class="t" style="left:779px;top:519px;width:99px;text-align:center;font-size:11px;line-height:13px;letter-spacing:-0.1px">0,00 €</div>
<div class="t" style="left:879px;top:519px;width:99px;text-align:center;font-size:11px;line-height:13px;letter-spacing:-0.1px">0,00 €</div>
<div class="t" style="left:980px;top:519px;font-size:11px;line-height:13px;color:#000;letter-spacing:0px;">(§ 10 Abs. 1 Satz 1 W…</div>
<div class="t" style="left:1104px;top:519px;font-size:11px;line-height:13px;color:#000;letter-spacing:-0.15px;">Ausstellung einer WBK ohne die Eintragun…</div>
<div class="b" style="left:181px;top:535px;width:1167px;height:1px;border-top:1px dotted #a0a0a0;"></div>
<div class="t" style="left:204px;top:540px;width:80px;text-align:center;font-size:11px;line-height:13px">2</div>
<div class="t" style="left:286px;top:540px;font-size:11px;line-height:13px;color:#000;letter-spacing:-0.2px;">Ausstellung einer WBK ohne die Eintragu…</div>
<div class="t" style="left:501px;top:540px;font-size:11px;line-height:13px;color:#000;letter-spacing:0.22px;">05.08.2022 08:37:11</div>
<div class="t" style="left:681px;top:540px;font-size:11px;line-height:13px;color:#000;letter-spacing:-0.15px;">Administrator</div>
<div class="t" style="left:779px;top:540px;width:99px;text-align:center;font-size:11px;line-height:13px;letter-spacing:-0.1px">35,00 €</div>
<div class="t" style="left:879px;top:540px;width:99px;text-align:center;font-size:11px;line-height:13px;letter-spacing:-0.1px">0,00 €</div>
<div class="t" style="left:980px;top:540px;font-size:11px;line-height:13px;color:#000;letter-spacing:0px;">(§ 20 Abs. 3 WaffG)</div>
<div class="t" style="left:1104px;top:540px;font-size:11px;line-height:13px;color:#000;letter-spacing:-0.15px;">Ausstellung einer WBK ohne die Eintragun…</div>
<div class="b" style="left:181px;top:556px;width:1167px;height:1px;border-top:1px dotted #a0a0a0;"></div>
<div class="t" style="left:204px;top:561px;width:80px;text-align:center;font-size:11px;line-height:13px">3</div>
<div class="t" style="left:286px;top:561px;font-size:11px;line-height:13px;color:#000;letter-spacing:-0.2px;">Ausstellung einer WBK einschließlich der E…</div>
<div class="t" style="left:501px;top:561px;font-size:11px;line-height:13px;color:#000;letter-spacing:0.22px;">05.08.2022 08:37:12</div>
<div class="t" style="left:681px;top:561px;font-size:11px;line-height:13px;color:#000;letter-spacing:-0.15px;">Administrator</div>
<div class="t" style="left:779px;top:561px;width:99px;text-align:center;font-size:11px;line-height:13px;letter-spacing:-0.1px">60,00 €</div>
<div class="t" style="left:879px;top:561px;width:99px;text-align:center;font-size:11px;line-height:13px;letter-spacing:-0.1px">0,00 €</div>
<div class="t" style="left:980px;top:561px;font-size:11px;line-height:13px;color:#000;letter-spacing:0px;">(Anlage 2 Abschnitt 2 …</div>
<div class="t" style="left:1104px;top:561px;font-size:11px;line-height:13px;color:#000;letter-spacing:-0.15px;">Ausstellung einer WBK einschließlich der Ei…</div>
<div class="b" style="left:181px;top:577px;width:1167px;height:1px;border-top:1px dotted #a0a0a0;"></div>
<div class="t" style="left:204px;top:582px;width:80px;text-align:center;font-size:11px;line-height:13px">4</div>
<div class="t" style="left:286px;top:582px;font-size:11px;line-height:13px;color:#000;letter-spacing:-0.2px;">Bewilligung einer Fristverlängerung</div>
<div class="t" style="left:501px;top:582px;font-size:11px;line-height:13px;color:#000;letter-spacing:0.22px;">05.08.2022 08:37:13</div>
<div class="t" style="left:681px;top:582px;font-size:11px;line-height:13px;color:#000;letter-spacing:-0.15px;">Administrator</div>
<div class="t" style="left:779px;top:582px;width:99px;text-align:center;font-size:11px;line-height:13px;letter-spacing:-0.1px">0,00 €</div>
<div class="t" style="left:879px;top:582px;width:99px;text-align:center;font-size:11px;line-height:13px;letter-spacing:-0.1px">0,00 €</div>
<div class="t" style="left:980px;top:582px;font-size:11px;line-height:13px;color:#000;letter-spacing:0px;">(§ 21 Abs. 5 Satz 2 in …</div>
<div class="t" style="left:1104px;top:582px;font-size:11px;line-height:13px;color:#000;letter-spacing:-0.15px;">Bewilligung einer Fristverlängerung (§ 21 …</div>
<div class="b" style="left:181px;top:598px;width:1167px;height:1px;border-top:1px dotted #a0a0a0;"></div>
<div class="t" style="left:204px;top:603px;width:80px;text-align:center;font-size:11px;line-height:13px">5</div>
<div class="t" style="left:286px;top:603px;font-size:11px;line-height:13px;color:#000;letter-spacing:-0.2px;">Ausstellung einer WBK ohne die Eintragu…</div>
<div class="t" style="left:501px;top:603px;font-size:11px;line-height:13px;color:#000;letter-spacing:0.22px;">05.08.2022 08:40:59</div>
<div class="t" style="left:681px;top:603px;font-size:11px;line-height:13px;color:#000;letter-spacing:-0.15px;">Administrator</div>
<div class="t" style="left:779px;top:603px;width:99px;text-align:center;font-size:11px;line-height:13px;letter-spacing:-0.1px">15,00 €</div>
<div class="t" style="left:879px;top:603px;width:99px;text-align:center;font-size:11px;line-height:13px;letter-spacing:-0.1px">0,00 €</div>
<div class="t" style="left:980px;top:603px;font-size:11px;line-height:13px;color:#000;letter-spacing:0px;">(§ 13 Abs. 3 Satz 2 W…</div>
<div class="t" style="left:1104px;top:603px;font-size:11px;line-height:13px;color:#000;letter-spacing:-0.15px;">Ausstellung einer WBK ohne die Eintragun…</div>
<div class="b" style="left:181px;top:620px;width:1167px;height:1px;background:#808080;"></div>
<div class="b" style="left:181px;top:515px;width:1167px;height:20px;border:1px solid #1e78d2;"></div>
<div class="t" style="left:185px;top:642px;font-size:11px;line-height:13px;color:#000;letter-spacing:-0.1px;">Datensatz:</div>
<div class="t" style="left:331px;top:642px;font-size:11px;line-height:13px;color:#000;letter-spacing:-0.1px;">von 5</div>
<div class="b" style="left:282px;top:639px;width:46px;height:17px;background:#fff;border-left:1px solid #a0a0a0;border-top:1px solid #a0a0a0;border-right:1px solid #a0a0a0;"></div>
<div class="t" style="left:282px;top:642px;width:42px;text-align:right;font-size:11px;line-height:13px">1</div>
<svg style="left:181px;top:21px" width="16" height="16" viewBox="0 0 16 16"><defs><linearGradient id="pg" x1="0" y1="0" x2="1" y2="1"><stop offset="0" stop-color="#f0f6ff"/><stop offset="1" stop-color="#a8c0ec"/></linearGradient></defs><path d="M0.5 0.5 h7.5 l3.5 3.5 v10 h-11 z" fill="url(#pg)" stroke="#7890c8"/><path d="M8 0.5 l3.5 3.5 h-3.5 z" fill="#4a90e0"/><path d="M1 14.5 h11 v-10" fill="none" stroke="#404858" stroke-width="1"/><path d="M9.2 4.6 A3.4 3.4 0 1 0 9.2 10.4" fill="none" stroke="#404850" stroke-width="1.2"/><rect x="2.5" y="6.2" width="4.5" height="1" fill="#404850"/><rect x="2.5" y="8.2" width="4.5" height="1" fill="#404850"/><g stroke="#8a6010" stroke-width="0.7" fill="#e0b850"><rect x="9.5" y="8" width="5" height="2" rx="0.9"/><rect x="9.5" y="10.5" width="5" height="2" rx="0.9"/><rect x="9.5" y="13" width="5" height="2" rx="0.9"/><rect x="4.5" y="13" width="5" height="2" rx="0.9"/></g></svg>
<svg style="left:182px;top:96px" width="14" height="14" viewBox="0 0 14 14"><path d="M0 0 h14 v14 h-13 l-1 -1 z" fill="#a0a0a0"/><rect x="3" y="1" width="8" height="5" fill="#f0f0f0"/><rect x="9" y="10" width="2" height="3" fill="#f0f0f0"/></svg>
<svg style="left:266px;top:97px" width="14" height="13" viewBox="0 0 14 13"><path d="M1.5 1.5 L12.5 11.5" stroke="#000" stroke-width="2"/><path d="M12.5 1 L2 11.5" stroke="#000" stroke-width="1.6"/><path d="M0.8 11.5 L2.5 10" stroke="#000" stroke-width="2.2"/></svg>
<svg style="left:351px;top:95px" width="17" height="15" viewBox="0 0 17 15"><rect x="0.5" y="3.5" width="11" height="11" fill="#fff" stroke="#000"/><path d="M3 6 h1 v1 h-1 z" fill="#000"/><rect x="2" y="9" width="2" height="1" fill="#000"/><rect x="5" y="9" width="5" height="1" fill="#000"/><rect x="2" y="11" width="2" height="1" fill="#000"/><rect x="5" y="11" width="5" height="1" fill="#000"/><path d="M3 6 L7 1 h6 v5 h-6 l-1 1" fill="#c8c8c8" stroke="#000" stroke-width="1"/><path d="M4 6 l3 -3 l2 2 l-2 2 z" fill="#000" opacity="0.5"/><rect x="14" y="0.5" width="2.2" height="7" fill="#000090"/></svg>
<svg style="left:435px;top:95px" width="17" height="16" viewBox="0 0 17 16"><circle cx="10.5" cy="5.8" r="4.7" fill="#fff" stroke="#000" stroke-width="1.5"/><path d="M8 3.2 a3.5 3.5 0 0 0 -0.3 4.5" fill="none" stroke="#00e0f0" stroke-width="1"/><path d="M12.5 2.5 a3.5 3.5 0 0 1 1 2" fill="none" stroke="#00e0f0" stroke-width="1"/><path d="M7 9.5 L1.5 14.8" stroke="#000" stroke-width="2.4" stroke-linecap="round"/></svg>
<svg style="left:179px;top:121px" width="34" height="34" viewBox="0 0 34 34"><defs><pattern id="dith3" width="2" height="2" patternUnits="userSpaceOnUse"><rect width="2" height="2" fill="#ffff00"/><rect width="1" height="1" fill="#ffffa0"/><rect x="1" y="1" width="1" height="1" fill="#ffffa0"/></pattern></defs><path d="M11.7 1.6 L32.4 12 L22 32.2 L1.6 22 Z" fill="#fff" stroke="#000" stroke-width="1.5" stroke-linejoin="round"/><path d="M14.3 13.1 L18.0 15.0 M8.7 12.8 L17.0 17.0 M7.7 14.9 L18.5 20.3 M6.7 16.9 L17.5 22.3 M5.7 19.0 L16.5 24.4 " stroke="#707070" stroke-width="1.1" stroke-dasharray="1.6 0.6"/><path d="M1.1 7.6 L9.6 2.9 L15 10.2 L5.8 14.6 Z" fill="url(#dith3)" stroke="#505020" stroke-width="0.9"/><path d="M3.5 8.5 L11 4.5 M5 11 L12.5 7 M7 13 L14 9.5" stroke="#909070" stroke-width="0.7"/><path d="M22.5 14 l3 -1.5 l0.5 3 z" fill="#00e8f0"/><path d="M21 15.5 l2.5 1.5 l-2 2.5 z" fill="#f000d8"/></svg>
<svg style="left:181px;top:438px" width="16" height="15" viewBox="0 0 16 15"><path d="M0.5 0.5 h5 l2 2 v9 h-7 z" fill="none" stroke="#a0a0a0"/><rect x="3" y="6" width="10" height="9" rx="1.5" fill="#a0a0a0"/><path d="M9 2.5 h4 l-1.5 -1.5 M13 2.5 l-1.5 1.5" fill="none" stroke="#a0a0a0" stroke-width="1"/></svg>
<svg style="left:270px;top:437px" width="17" height="15" viewBox="0 0 17 15"><rect x="0.5" y="3.5" width="11" height="11" fill="none" stroke="#a0a0a0"/><rect x="2" y="9" width="2" height="1" fill="#a0a0a0"/><rect x="5" y="9" width="5" height="1" fill="#a0a0a0"/><rect x="2" y="11" width="2" height="1" fill="#a0a0a0"/><rect x="5" y="11" width="5" height="1" fill="#a0a0a0"/><path d="M2 7 L7 1 h6 v5 h-6 l-1 2 z" fill="#a0a0a0"/><rect x="14" y="0" width="2.2" height="7" fill="#a0a0a0"/></svg>
<svg style="left:359px;top:438px" width="14" height="14" viewBox="0 0 14 14"><path d="M1 1 L13 13 M13 1 L1 13" stroke="#a0a0a0" stroke-width="1.5"/></svg>
<svg style="left:1239px;top:28px" width="10" height="1"><rect width="10" height="1" fill="#c0c0c0"/></svg>
<svg style="left:1284px;top:23px" width="11" height="11"><rect x="0.5" y="0.5" width="9" height="9" fill="none" stroke="#000" stroke-width="1.1"/></svg>
<svg style="left:1330px;top:23px" width="11" height="11"><path d="M0.3 0.3 L9.7 9.7 M9.7 0.3 L0.3 9.7" stroke="#000" stroke-width="1.2"/></svg>
<svg style="left:1365px;top:23px" width="11" height="9"><rect x="0.7" y="0.7" width="9.6" height="7.6" rx="1.5" fill="#f4f4f4" stroke="#404858" stroke-width="1.3"/><rect x="3" y="3.5" width="5" height="2" fill="#606878"/></svg>
<svg style="left:1398px;top:23px" width="12" height="9"><path d="M2.2 1.6 L9.8 7.4 M9.8 1.6 L2.2 7.4" stroke="#404858" stroke-width="3.4" stroke-linecap="round"/><path d="M2.2 1.6 L9.8 7.4 M9.8 1.6 L2.2 7.4" stroke="#f4f4f4" stroke-width="1.7" stroke-linecap="round"/></svg>
<svg style="left:266px;top:503px" width="9" height="8"><path d="M4 0.5 L7.5 7 H0.5" fill="none" stroke="#ffffff" stroke-width="1.2"/><path d="M4 0.5 L0.5 7" stroke="#7a7a7a" stroke-width="1.1"/></svg>
<svg style="left:556px;top:503px" width="9" height="8"><path d="M4 0.5 L7.5 7 H0.5" fill="none" stroke="#ffffff" stroke-width="1.2"/><path d="M4 0.5 L0.5 7" stroke="#7a7a7a" stroke-width="1.1"/></svg>
<div class="b" style="left:242px;top:640px;width:18px;height:16px;background:#f0f0f0;border-right:1px solid #696969;border-bottom:1px solid #696969;box-shadow:inset 1px 1px 0 #fff, inset -1px -1px 0 #a0a0a0;"></div>
<svg style="left:242px;top:640px" width="18" height="16"><rect x="4" y="3" width="2" height="9" fill="#000"/><path d="M14 3 L9 7.5 L14 12 Z" fill="#000"/></svg>
<div class="b" style="left:260px;top:640px;width:18px;height:16px;background:#f0f0f0;border-right:1px solid #696969;border-bottom:1px solid #696969;box-shadow:inset 1px 1px 0 #fff, inset -1px -1px 0 #a0a0a0;"></div>
<svg style="left:260px;top:640px" width="18" height="16"><path d="M12 3 L7 7.5 L12 12 Z" fill="#a0a0a0"/></svg>
<div class="b" style="left:367px;top:640px;width:18px;height:16px;background:#f0f0f0;border-right:1px solid #696969;border-bottom:1px solid #696969;box-shadow:inset 1px 1px 0 #fff, inset -1px -1px 0 #a0a0a0;"></div>
<svg style="left:367px;top:640px" width="18" height="16"><path d="M6 3 L11 7.5 L6 12 Z" fill="#000"/></svg>
<div class="b" style="left:385px;top:640px;width:18px;height:16px;background:#f0f0f0;border-right:1px solid #696969;border-bottom:1px solid #696969;box-shadow:inset 1px 1px 0 #fff, inset -1px -1px 0 #a0a0a0;"></div>
<svg style="left:385px;top:640px" width="18" height="16"><path d="M4 3 L9 7.5 L4 12 Z" fill="#000"/><rect x="10" y="3" width="2" height="9" fill="#000"/></svg>
<svg style="left:407px;top:643px" width="8" height="9"><path d="M6 1 L2 4.5 L6 8" fill="none" stroke="#505050" stroke-width="2"/></svg>
<div class="b" style="left:420px;top:640px;width:28px;height:15px;background:#c8c8c8;"></div>
<svg style="left:1336px;top:643px" width="8" height="9"><path d="M2 1 L6 4.5 L2 8" fill="none" stroke="#505050" stroke-width="2"/></svg>
</body></html>
